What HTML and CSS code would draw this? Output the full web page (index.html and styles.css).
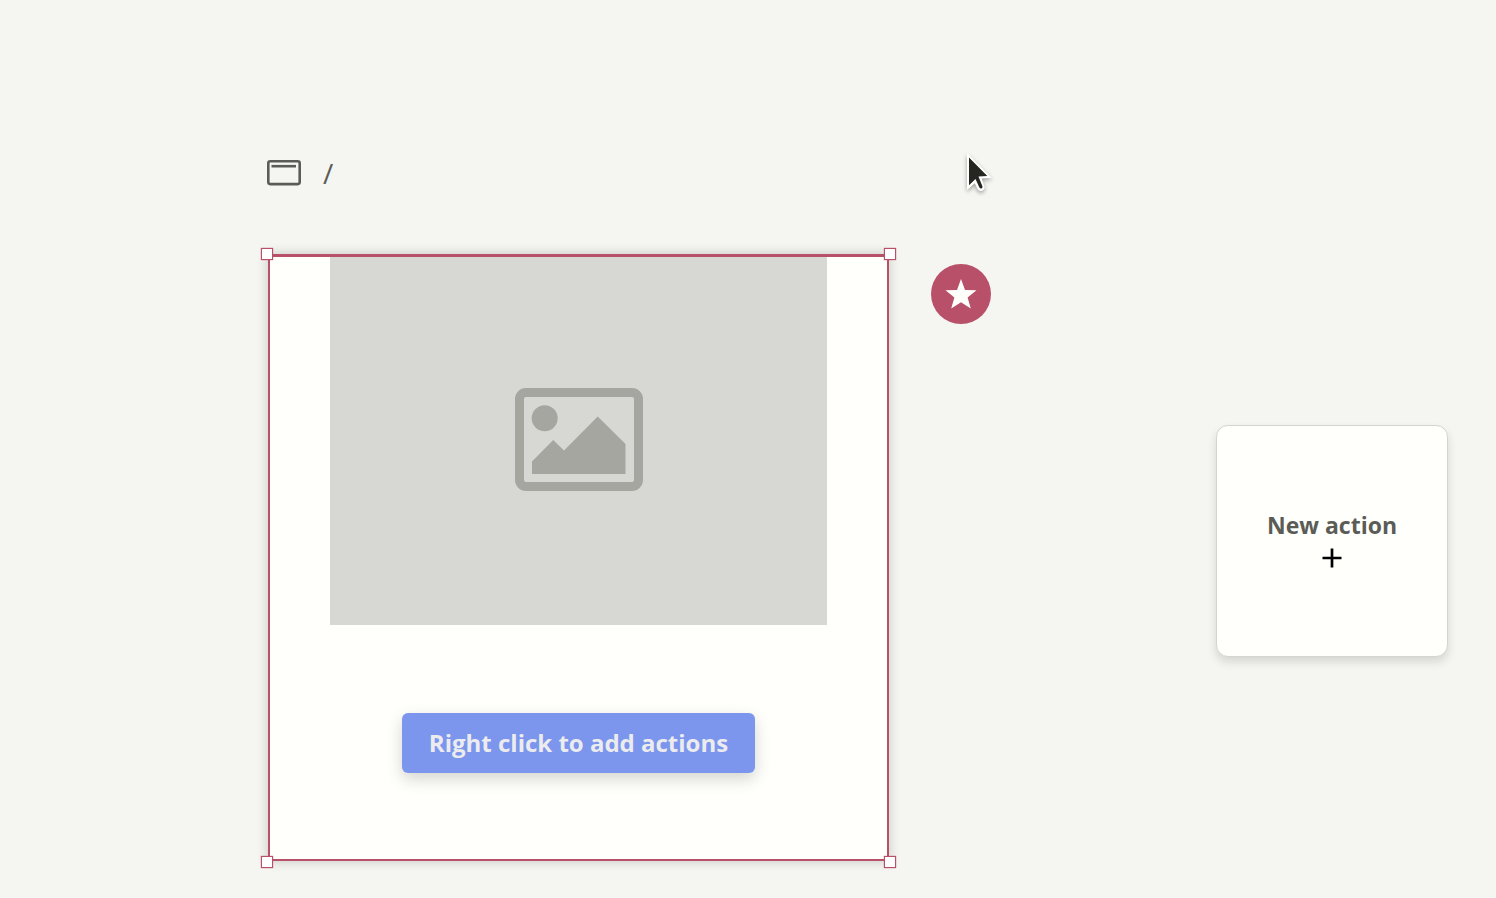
FILE: index.html
```html
<!DOCTYPE html>
<html lang="en">
<head>
<meta charset="utf-8">
<meta name="viewport" content="width=device-width, initial-scale=1">
<title>Action editor</title>
<link rel="stylesheet" href="styles.css">
</head>
<body>
<main class="editor">
  <nav class="path" aria-label="Path">
    <a class="path-home" href="#" aria-label="Page">
      <svg width="34" height="26" viewBox="0 0 34 26" fill="none" stroke="#5b5c56">
        <rect x="1.300" y="1.300" width="31.400" height="22.800" rx="2" stroke-width="2.600"/>
        <path d="M4.500 6.200h24.500" stroke-width="2.600"/>
      </svg>
    </a>
    <span class="path-separator">/</span>
  </nav>

  <div class="workspace">
    <section class="screen" aria-label="Selected screen">
      <div class="picture">
        <svg class="picture-icon" width="128" height="104" viewBox="0 0 128 104" fill="#a5a6a0" aria-hidden="true">
          <path fill-rule="evenodd" d="M11 0h106a11 11 0 0 1 11 11v81a11 11 0 0 1-11 11H11A11 11 0 0 1 0 92V11A11 11 0 0 1 11 0ZM11 9Q9 9 9 11V92Q9 94 11 94H117Q119 94 119 92V11Q119 9 117 9Z"/>
          <circle cx="29.700" cy="30.300" r="13"/>
          <path d="M17 86V73.500L38.200 52L49 62.500L82.700 28.500L110.500 56V86Z"/>
        </svg>
      </div>
      <button class="primary" type="button">Right click to add actions</button>
      <span class="handle handle-nw"></span>
      <span class="handle handle-ne"></span>
      <span class="handle handle-sw"></span>
      <span class="handle handle-se"></span>
    </section>

    <button class="favorite" type="button" aria-label="Favorite">
      <svg width="32" height="30" viewBox="0 0 32 30" fill="#fffffc">
        <path d="M16 0L20 11L31.500 11.300L22.600 18.400L25.800 29.500L16 23.300L6.200 29.500L9.400 18.400L.500 11.300L12 11Z"/>
      </svg>
    </button>

    <button class="new-action" type="button">
      <span class="new-action-label">New action</span>
      <svg width="20" height="20" viewBox="0 0 20 20" fill="none" stroke="#000" stroke-width="2.700" aria-hidden="true">
        <path d="M10 .5v19M.5 10h19"/>
      </svg>
    </button>
  </div>

  <svg class="pointer" width="32" height="44" viewBox="0 0 32 44" aria-hidden="true">
    <path d="M3 .7V38L10.800 31.200L13.500 37Q15.500 40 18.500 38.500Q21.300 37 20.300 34L17.500 26.500L27.700 25.800Z" fill="#fff"/>
    <path d="M5 5.500V33.200L11.500 27L15.500 35.700Q16.500 37 17.900 36.200Q18.900 35.400 18.400 34.200L14.500 24.500L23.300 24Z" fill="#252621"/>
  </svg>
</main>
</body>
</html>
```
FILE: styles.css
```css
* {
  box-sizing: border-box;
}

body {
  margin: 0;
  background: #f5f5f1;
  color: #5b5c56;
  font-family: "Open Sans", "Noto Sans", sans-serif;
}

button {
  border: 0;
  font: inherit;
  cursor: pointer;
}

svg {
  display: block;
}

.editor {
  position: relative;
  min-height: 100vh;
  padding: 156px 48px 36px 268px;
}

.path {
  display: flex;
  align-items: center;
  gap: 22px;
  height: 34px;
  margin: 0 0 64px -1px;
}

.path-separator {
  font-size: 28px;
  line-height: 34px;
}

.workspace {
  display: flex;
  align-items: flex-start;
}

.screen {
  position: relative;
  flex: 0 1 621px;
  display: flex;
  flex-direction: column;
  align-items: center;
  gap: 88px;
  padding: 0 60px 86px;
  border: 2px solid #b85069;
  border-top-width: 3px;
  background: #fffffc;
  box-shadow: 0 0 10px rgba(60, 62, 50, 0.25);
}

.picture {
  display: flex;
  align-items: center;
  justify-content: center;
  width: 100%;
  aspect-ratio: 497 / 368;
  padding-bottom: 3px;
  background: #d7d8d3;
}

.primary {
  padding: 13px 27px;
  border-radius: 6px;
  background: #7b96ec;
  color: #ececef;
  font-size: 24px;
  font-weight: 700;
  line-height: 34px;
  white-space: nowrap;
  box-shadow: 0 6px 16px rgba(60, 62, 50, 0.22);
}

.handle {
  position: absolute;
  width: 12px;
  height: 12px;
  border: 1px solid #b85069;
  background: #fff;
  box-shadow: 0 0 1px #b85069;
}

.handle-nw,
.handle-ne {
  top: -9px;
}

.handle-sw,
.handle-se {
  bottom: -9px;
}

.handle-nw,
.handle-sw {
  left: -9px;
}

.handle-ne,
.handle-se {
  right: -9px;
}

.favorite {
  display: flex;
  flex: none;
  align-items: center;
  justify-content: center;
  width: 60px;
  height: 60px;
  margin: 10px 0 0 42px;
  padding: 0;
  border-radius: 50%;
  background: #b85069;
}

.new-action {
  display: flex;
  flex: none;
  flex-direction: column;
  align-items: center;
  justify-content: center;
  gap: 6px;
  width: 232px;
  height: 232px;
  margin: 171px 0 0 auto;
  padding: 0 0 6px;
  border: 1px solid #d4d5d0;
  border-radius: 12px;
  background: #fffffc;
  color: #5b5c56;
  box-shadow: 0 5px 9px rgba(60, 62, 50, 0.16);
}

.new-action-label {
  font-size: 23px;
  font-weight: 700;
  line-height: 34px;
}

.pointer {
  position: absolute;
  top: 152px;
  left: 964px;
  filter: drop-shadow(0 2px 2px rgba(0, 0, 0, 0.35));
}
```
